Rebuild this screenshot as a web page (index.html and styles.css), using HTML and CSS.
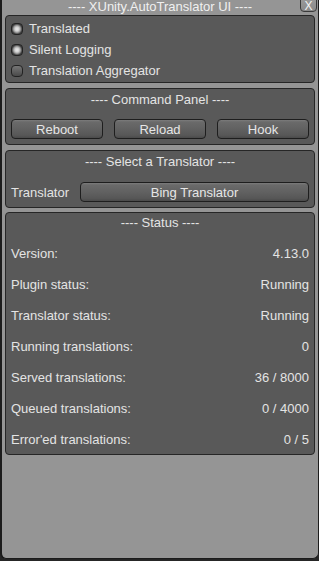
FILE: index.html
```html
<!DOCTYPE html>
<html>
<head>
<meta charset="utf-8">
<link rel="stylesheet" href="styles.css">
</head>
<body>
<div class="window">
  <div class="titlebar">---- XUnity.AutoTranslator UI ----</div>
  <button class="close">X</button>

  <div class="panel toggles">
    <label class="toggle"><span class="check on"></span>Translated</label>
    <label class="toggle"><span class="check on"></span>Silent Logging</label>
    <label class="toggle"><span class="check"></span>Translation Aggregator</label>
  </div>

  <div class="panel command">
    <div class="ptitle">---- Command Panel ----</div>
    <div class="btnrow">
      <button class="btn">Reboot</button>
      <button class="btn">Reload</button>
      <button class="btn">Hook</button>
    </div>
  </div>

  <div class="panel select">
    <div class="ptitle">---- Select a Translator ----</div>
    <div class="trow">
      <span class="tlabel">Translator</span>
      <button class="btn wide">Bing Translator</button>
    </div>
  </div>

  <div class="panel status">
    <div class="ptitle">---- Status ----</div>
    <div class="srow"><span>Version:</span><span>4.13.0</span></div>
    <div class="srow"><span>Plugin status:</span><span>Running</span></div>
    <div class="srow"><span>Translator status:</span><span>Running</span></div>
    <div class="srow"><span>Running translations:</span><span>0</span></div>
    <div class="srow"><span>Served translations:</span><span>36 / 8000</span></div>
    <div class="srow"><span>Queued translations:</span><span>0 / 4000</span></div>
    <div class="srow"><span>Error'ed translations:</span><span>0 / 5</span></div>
  </div>
</div>
</body>
</html>
```

FILE: styles.css
```css
* { box-sizing: border-box; }
html, body {
  margin: 0;
  padding: 0;
  background: #262626;
}
body {
  width: 319px;
  height: 561px;
  overflow: hidden;
  font-family: "Liberation Sans", Arial, sans-serif;
  font-size: 13px;
  color: #e4e4e4;
}
.window {
  position: relative;
  width: 319px;
  height: 559px;
  background: #959595;
  border-left: 2px solid #1c1c1c;
  border-right: 1px solid #1c1c1c;
  border-bottom: 1px solid #1c1c1c;
  border-radius: 0 0 6px 6px;
  padding: 0 3px 0 3px;
  display: flex;
  flex-direction: column;
}
.titlebar {
  height: 15px;
  line-height: 13px;
  text-align: center;
  color: #f0f0f0;
  white-space: nowrap;
}
.close {
  position: absolute;
  top: -3px;
  right: 1px;
  width: 17px;
  height: 15px;
  padding: 2px 0 0 0;
  margin: 0;
  font-family: "Liberation Sans", Arial, sans-serif;
  font-size: 12px;
  line-height: 12px;
  color: #f2f2f2;
  background: linear-gradient(#9a9a9a, #8a8a8a);
  border: 1px solid #3a3a3a;
  border-radius: 0 0 4px 4px;
}
.panel {
  background: #595959;
  border: 1px solid #262626;
  border-radius: 4px;
  padding: 0 5px;
}
.toggles {
  padding-top: 2px;
  padding-bottom: 0;
  height: 68px;
}
.toggle {
  display: flex;
  align-items: center;
  height: 21px;
  gap: 6px;
}
.check {
  display: block;
  width: 12px;
  height: 12px;
  border-radius: 4px;
  border: 1px solid #222;
  background: linear-gradient(#767676, #4a4a4a);
}
.check.on {
  background: radial-gradient(circle at 50% 50%, #ececec 0, #d2d2d2 2px, #9a9a9a 3.5px, #444 5px);
}
.command {
  margin-top: 5px;
  height: 57px;
  padding-top: 1px;
}
.ptitle {
  height: 19px;
  line-height: 19px;
  text-align: center;
  white-space: nowrap;
}
.btnrow {
  margin-top: 10px;
  display: grid;
  grid-template-columns: 1fr 1fr 1fr;
  gap: 11px;
}
.btn {
  height: 20px;
  margin: 0;
  padding: 0;
  font-family: "Liberation Sans", Arial, sans-serif;
  font-size: 13px;
  color: #e6e6e6;
  border: 1px solid #1e1e1e;
  border-radius: 4px;
  background: linear-gradient(#7c7c7c 0, #6a6a6a 2px, #616161 50%, #575757 85%, #4a4a4a 100%);
}
.select {
  margin-top: 5px;
  height: 58px;
  padding-top: 1px;
}
.trow {
  margin-top: 11px;
  display: flex;
  align-items: center;
}
.tlabel {
  width: 69px;
  flex: none;
}
.wide {
  flex: 1;
}
.status {
  margin-top: 4px;
  height: 243px;
  display: flex;
  flex-direction: column;
  gap: 13px;
}
.srow {
  height: 18px;
  line-height: 18px;
  display: flex;
  justify-content: space-between;
  white-space: nowrap;
}
```
